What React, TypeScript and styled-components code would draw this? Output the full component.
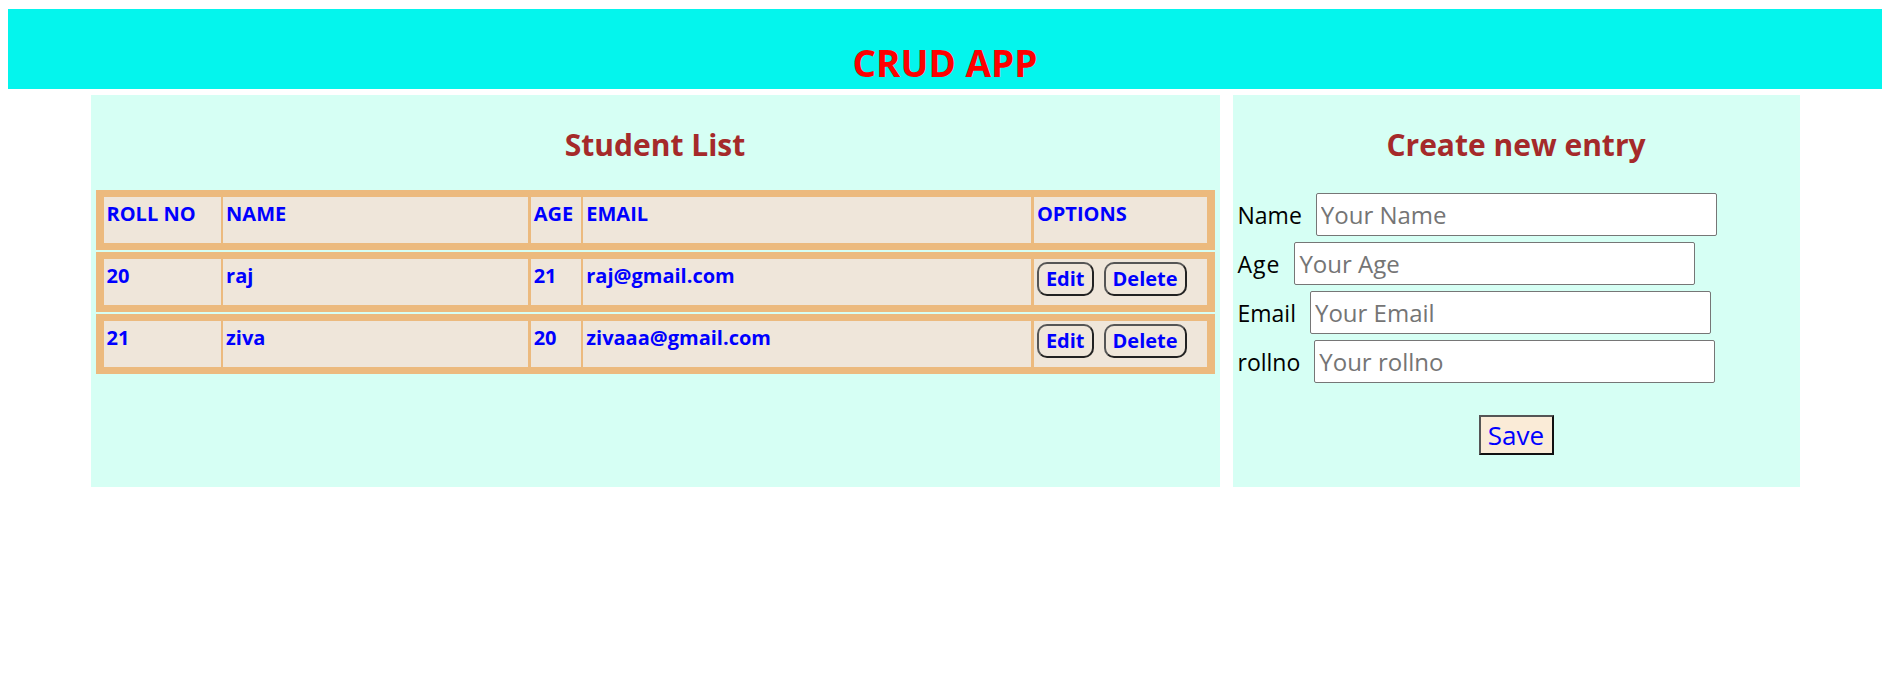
import React from "react";
import styled, { createGlobalStyle } from "styled-components";

const GlobalStyle = createGlobalStyle`
  body {
    margin: 8px;
    background: #ffffff;
    font-family: "Open Sans", "DejaVu Sans", sans-serif;
  }
  #root {
    padding-top: 1px;
  }
  * { box-sizing: border-box; }
`;

const Header = styled.header`
  height: 80px;
  background: #04f5ed;
  display: flex;
  align-items: flex-end;
  justify-content: center;
`;

const AppTitle = styled.h1`
  margin: 0 0 4px;
  font-size: 37px;
  line-height: 44px;
  font-weight: 700;
  color: #ff0000;
`;

const Main = styled.main`
  display: flex;
  gap: 13px;
  width: 1709px;
  margin: 6px auto 0;
`;

const Panel = styled.section<{ $width: number; $bottom?: number }>`
  width: ${(p) => p.$width}px;
  background: #d6fff4;
  padding: 0 5px ${(p) => p.$bottom ?? 0}px;
`;

const Heading = styled.h2`
  margin: 30px 0 25px;
  text-align: center;
  font-size: 30px;
  line-height: 40px;
  font-weight: 700;
  color: #a52a2a;
`;

const Table = styled.div`
  display: flex;
  flex-direction: column;
  gap: 2.6px;
`;

const Row = styled.div`
  display: grid;
  grid-template-columns: 117px 305px 50px 448px 1fr;
  gap: 2.6px;
  padding: 7px 8px;
  background: #ecba7e;
`;

const Cell = styled.div`
  height: 45.5px;
  padding: 3px 3px;
  background: #efe6da;
  color: #0000ff;
  font-size: 20px;
  line-height: 28px;
  font-weight: 700;
  display: flex;
  align-items: flex-start;
  gap: 10px;
  white-space: nowrap;
`;

const ActionButton = styled.button`
  height: 34px;
  padding: 0 7px;
  border: 2px solid;
  border-color: #555555 #222222 #222222 #555555;
  border-radius: 10px;
  background: transparent;
  color: #0000ff;
  font-family: inherit;
  font-size: 20px;
  font-weight: 700;
  line-height: 26px;
  cursor: pointer;
`;

const Form = styled.form`
  display: flex;
  flex-direction: column;
  gap: 6.5px;
  margin-top: 28px;
`;

const Field = styled.div`
  display: flex;
  align-items: center;
  gap: 14px;
  height: 42.5px;
`;

const Label = styled.label<{ $spacing?: number }>`
  font-size: 23px;
  line-height: 30px;
  color: #000000;
  padding-top: 2px;
  letter-spacing: ${(p) => p.$spacing ?? 0}px;
`;

const Input = styled.input`
  width: 401px;
  height: 42.5px;
  padding: 0 4px;
  border: 1px solid #767676;
  border-radius: 2px;
  background: #ffffff;
  font-family: inherit;
  font-size: 24px;
  color: #000000;
  &::placeholder {
    color: #757575;
  }
`;

const SaveRow = styled.div`
  display: flex;
  justify-content: center;
  margin-top: 32px;
`;

const SaveButton = styled.button`
  width: 75px;
  height: 40px;
  padding: 0;
  border: 2px solid;
  border-color: #555555 #111111 #111111 #555555;
  background: #faebd7;
  color: #0000ff;
  font-family: inherit;
  font-size: 26px;
  line-height: 34px;
  cursor: pointer;
`;

const students = [
  { roll: "20", name: "raj", age: "21", email: "raj@gmail.com" },
  { roll: "21", name: "ziva", age: "20", email: "zivaaa@gmail.com" },
];

const fields = [
  { label: "Name", placeholder: "Your Name", spacing: 0 },
  { label: "Age", placeholder: "Your Age", spacing: 1 },
  { label: "Email", placeholder: "Your Email", spacing: 0 },
  { label: "rollno", placeholder: "Your rollno", spacing: 0 },
];

export default function App() {
  return (
    <>
      <GlobalStyle />
      <Header>
        <AppTitle>CRUD APP</AppTitle>
      </Header>
      <Main>
        <Panel $width={1129}>
          <Heading>Student List</Heading>
          <Table>
            <Row>
              <Cell>ROLL NO</Cell>
              <Cell>NAME</Cell>
              <Cell>AGE</Cell>
              <Cell>EMAIL</Cell>
              <Cell>OPTIONS</Cell>
            </Row>
            {students.map((s) => (
              <Row key={s.roll}>
                <Cell>{s.roll}</Cell>
                <Cell>{s.name}</Cell>
                <Cell>{s.age}</Cell>
                <Cell>{s.email}</Cell>
                <Cell>
                  <ActionButton type="button">Edit</ActionButton>
                  <ActionButton type="button">Delete</ActionButton>
                </Cell>
              </Row>
            ))}
          </Table>
        </Panel>
        <Panel $width={567} $bottom={32}>
          <Heading>Create new entry</Heading>
          <Form onSubmit={(e) => e.preventDefault()}>
            {fields.map((f) => (
              <Field key={f.label}>
                <Label $spacing={f.spacing}>{f.label}</Label>
                <Input placeholder={f.placeholder} />
              </Field>
            ))}
          </Form>
          <SaveRow>
            <SaveButton type="button">Save</SaveButton>
          </SaveRow>
        </Panel>
      </Main>
    </>
  );
}
